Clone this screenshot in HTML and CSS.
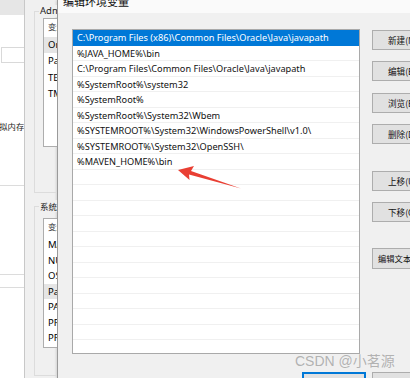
FILE: index.html
```html
<!DOCTYPE html>
<html>
<head>
<meta charset="utf-8">
<link rel="stylesheet" href="styles.css">
</head>
<body>
<div class="screen">
  <div class="win-a">
    <div class="a-top"></div>
    <div class="a-box"></div>
    <div class="a-text">虚拟内存</div>
    <div class="a-line a-l1"></div>
    <div class="a-line a-l2"></div>
    <div class="a-line a-l3"></div>
  </div>
  <div class="win-b">
    <div class="group g1">
      <span class="legend">Administrator 的用户变量</span>
      <div class="plist pl1">
        <div class="phead">变量</div>
        <div class="prow sel">OneDrive</div>
        <div class="prow">Path</div>
        <div class="prow">TEMP</div>
        <div class="prow">TMP</div>
      </div>
    </div>
    <div class="group g2">
      <span class="legend">系统变量</span>
      <div class="plist pl2">
        <div class="phead">变量</div>
        <div class="prow">MAVEN_HOME</div>
        <div class="prow">NUMBER_OF_PROCESSORS</div>
        <div class="prow">OS</div>
        <div class="prow sel">Path</div>
        <div class="prow">PATHEXT</div>
        <div class="prow">PROCESSOR_ARCHITECTURE</div>
        <div class="prow">PROCESSOR_IDENTIFIER</div>
      </div>
    </div>
  </div>
  <div class="dialog">
    <div class="titlebar"><span class="title">编辑环境变量</span></div>
    <div class="body">
      <div class="list">
        <div class="row selected">C:\Program Files (x86)\Common Files\Oracle\Java\javapath</div>
        <div class="row">%JAVA_HOME%\bin</div>
        <div class="row">C:\Program Files\Common Files\Oracle\Java\javapath</div>
        <div class="row">%SystemRoot%\system32</div>
        <div class="row">%SystemRoot%</div>
        <div class="row">%SystemRoot%\System32\Wbem</div>
        <div class="row">%SYSTEMROOT%\System32\WindowsPowerShell\v1.0\</div>
        <div class="row">%SYSTEMROOT%\System32\OpenSSH\</div>
        <div class="row">%MAVEN_HOME%\bin</div>
        <div class="row"></div>
        <div class="row"></div>
        <div class="row"></div>
        <div class="row"></div>
        <div class="row"></div>
        <div class="row"></div>
        <div class="row"></div>
        <div class="row"></div>
        <div class="row"></div>
        <div class="row"></div>
        <div class="row"></div>
        <div class="row"></div>
      </div>
      <div class="buttons">
        <div class="btn"><span class="lbl">新建(N)</span></div>
        <div class="btn"><span class="lbl">编辑(E)</span></div>
        <div class="btn"><span class="lbl">浏览(B)...</span></div>
        <div class="btn"><span class="lbl">删除(D)</span></div>
        <div class="btn sp1"><span class="lbl">上移(U)</span></div>
        <div class="btn"><span class="lbl">下移(O)</span></div>
        <div class="btn sp2 wide"><span class="lbl">编辑文本(T)...</span></div>
      </div>
    </div>
    <div class="footer">
      <div class="btn ok"><span class="lbl">确定</span></div>
      <div class="btn"><span class="lbl">取消</span></div>
    </div>
  </div>
  <svg class="arrow" width="410" height="378" viewBox="0 0 410 378">
    <polygon points="178,170 194,166 191,171 241,188.5 189,174.5 189.5,180" fill="#e93f33"/>
  </svg>
  <div class="watermark">CSDN @小茗源</div>
</div>
</body>
</html>
```

FILE: styles.css
```css
* { box-sizing: border-box; }
html, body { margin: 0; padding: 0; }
body {
  width: 410px;
  height: 378px;
  overflow: hidden;
  background: #f0f0f0;
  font-family: "Noto Sans", "Noto Sans CJK SC", sans-serif;
  font-size: 9.2px;
  color: #000;
}
.screen {
  position: relative;
  width: 410px;
  height: 378px;
  display: flex;
  overflow: hidden;
}

/* leftmost background window */
.win-a {
  width: 25px;
  flex: none;
  background: #fff;
  border-right: 1px solid #c8c8c8;
  overflow: hidden;
}
.a-top { height: 15px; background: #e6e6e6; }
.a-box {
  margin-top: 32px;
  height: 16px;
  border-top: 1px solid #d9d9d9;
  border-bottom: 1px solid #d9d9d9;
  border-left: 1px solid #d9d9d9;
  margin-left: 1px;
}
.a-text {
  margin-top: 57px;
  margin-left: -9px;
  white-space: nowrap;
  font-family: "Noto Sans CJK SC", sans-serif;
  font-size: 8.3px;
  line-height: 12px;
  color: #222;
}
.a-line { height: 1px; background: #dcdcdc; }
.a-l1 { margin-top: 53px; }
.a-l2 { margin-top: 88px; }
.a-l3 { margin-top: 12px; }

/* second background window */
.win-b {
  width: 32px;
  flex: none;
  background: #f0f0f0;
  overflow: hidden;
  padding-left: 9px;
}
.group {
  position: relative;
  width: 200px;
  border: 1px solid #dcdcdc;
  padding: 6px 0 0 8px;
}
.g1 { margin-top: 11px; height: 182px; }
.g2 { margin-top: 13px; height: 170px; }
.legend {
  position: absolute;
  top: -7px;
  left: 4px;
  padding: 0 1px;
  background: #f0f0f0;
  line-height: 12px;
  white-space: nowrap;
  font-size: 9.5px;
  color: #222;
}
.g2 .legend { font-family: "Noto Sans CJK SC", sans-serif; font-size: 8.5px; }
.plist {
  background: #fff;
  border: 1px solid #adadad;
  width: 180px;
}
.pl1 { height: 129px; }
.pl2 { height: 130px; margin-top: 5px; }
.phead {
  height: 18px;
  line-height: 15px;
  padding-left: 4px;
  font-family: "Noto Sans CJK SC", sans-serif;
  font-size: 8.3px;
  color: #333;
}
.prow {
  height: 16.3px;
  line-height: 16px;
  padding-left: 4px;
  white-space: nowrap;
  font-size: 9.5px;
}
.pl2 .prow { height: 15.5px; line-height: 15.5px; }
.prow.sel { background: #e5e5e5; }

/* main dialog */
.dialog {
  flex: none;
  width: 440px;
  background: #f0f0f0;
  border-left: 1px solid #9a9a9a;
  box-shadow: -1px 0 2px rgba(0,0,0,0.12);
}
.titlebar {
  height: 13px;
  background: #fafafa;
  padding-left: 5px;
  overflow: hidden;
}
.title {
  display: block;
  margin-top: -6px;
  line-height: 14px;
  font-family: "Noto Sans CJK SC", sans-serif;
  font-size: 11px;
  color: #111;
}
.body {
  display: flex;
  padding: 16px 0 0 14px;
}
.list {
  width: 288px;
  height: 325px;
  flex: none;
  background: #fff;
  border: 1px solid #a9a9a9;
  overflow: hidden;
}
.row {
  height: 15.5px;
  line-height: 15px;
  padding-left: 4px;
  border-bottom: 1px solid #f0f0f0;
  white-space: nowrap;
  color: #111;
}
.row.selected {
  background: #0078d7;
  color: #fff;
  border-bottom-color: #0078d7;
}
.buttons {
  flex: none;
  width: 60px;
  display: flex;
  flex-direction: column;
  gap: 11.3px;
  margin-left: 12px;
  padding-top: 1px;
}
.btn {
  flex: none;
  width: 60px;
  height: 20px;
  background: #e1e1e1;
  border: 1px solid #adadad;
  padding-left: 15px;
  font-family: "Noto Sans CJK SC", sans-serif;
  font-size: 8.6px;
  line-height: 18px;
  white-space: nowrap;
  overflow: hidden;
  color: #111;
}
.btn.wide { padding-left: 5px; font-size: 8.3px; }
.sp1 { margin-top: 15.5px; }
.sp2 { margin-top: 14.5px; height: 21px; line-height: 19px; }
.footer {
  display: flex;
  gap: 6px;
  padding-left: 244px;
  margin-top: 18px;
}
.footer .btn { width: 64px; padding-left: 0; text-align: center; }
.btn.ok { border: 2px solid #0078d7; }

.arrow {
  position: absolute;
  left: 0;
  top: 0;
  pointer-events: none;
}
.watermark {
  position: absolute;
  left: 295px;
  top: 353px;
  font-family: "Liberation Sans", "Noto Sans CJK SC", sans-serif;
  font-size: 14px;
  line-height: 17px;
  color: rgba(150,150,150,0.7);
  white-space: nowrap;
}
```
